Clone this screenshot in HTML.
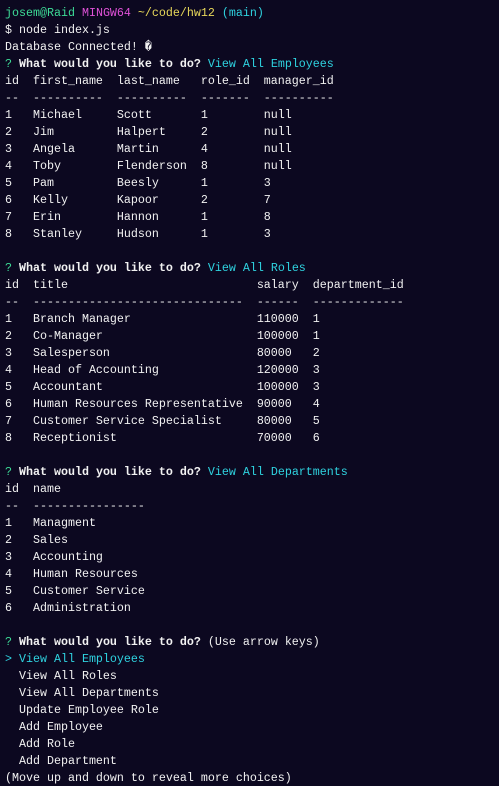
<!DOCTYPE html>
<html><head><meta charset="utf-8"><style>
html,body{margin:0;padding:0;background:#0c0820;width:499px;height:786px;overflow:hidden}
pre{margin:0;padding:5px 0 0 5px;font-family:"Liberation Mono","DejaVu Sans Mono",monospace;font-size:11.67px;line-height:17px;color:#f2f2f2}
.g{color:#3ddc97}.m{color:#e052d8}.y{color:#e8d85a}.c{color:#2fd3e0}.b{font-weight:bold}
</style></head><body><pre><span class="g">josem@Raid</span> <span class="m">MINGW64</span> <span class="y">~/code/hw12</span> <span class="c">(main)</span>
$ node index.js
Database Connected! �
<span class="g">?</span> <span class="b">What would you like to do?</span> <span class="c">View All Employees</span>
id  first_name  last_name   role_id  manager_id
--  ----------  ----------  -------  ----------
1   Michael     Scott       1        null
2   Jim         Halpert     2        null
3   Angela      Martin      4        null
4   Toby        Flenderson  8        null
5   Pam         Beesly      1        3
6   Kelly       Kapoor      2        7
7   Erin        Hannon      1        8
8   Stanley     Hudson      1        3

<span class="g">?</span> <span class="b">What would you like to do?</span> <span class="c">View All Roles</span>
id  title                           salary  department_id
--  ------------------------------  ------  -------------
1   Branch Manager                  110000  1
2   Co-Manager                      100000  1
3   Salesperson                     80000   2
4   Head of Accounting              120000  3
5   Accountant                      100000  3
6   Human Resources Representative  90000   4
7   Customer Service Specialist     80000   5
8   Receptionist                    70000   6

<span class="g">?</span> <span class="b">What would you like to do?</span> <span class="c">View All Departments</span>
id  name
--  ----------------
1   Managment
2   Sales
3   Accounting
4   Human Resources
5   Customer Service
6   Administration

<span class="g">?</span> <span class="b">What would you like to do?</span> (Use arrow keys)
<span class="c">&gt; View All Employees</span>
  View All Roles
  View All Departments
  Update Employee Role
  Add Employee
  Add Role
  Add Department
(Move up and down to reveal more choices)</pre></body></html>
